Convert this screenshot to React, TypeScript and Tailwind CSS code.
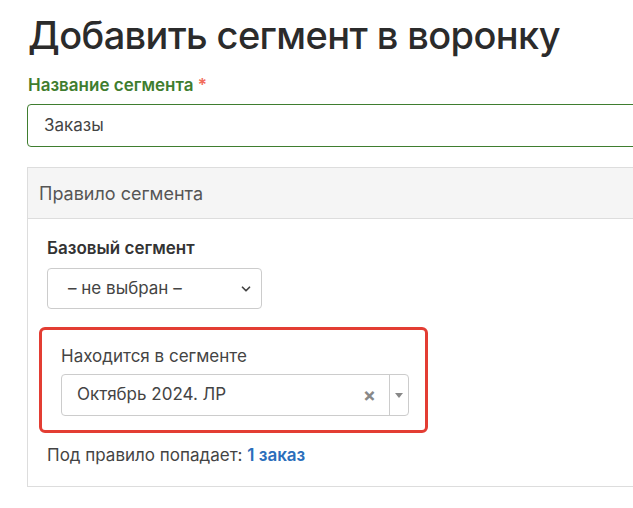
import { ChevronDown } from "lucide-react";

export default function App() {
  return (
    <div className="min-h-screen overflow-hidden bg-white pl-[27px] pt-[10px] text-[#333] [font-family:Inter,'Noto_Sans',sans-serif]">
      <h1 className="text-[38px] leading-[50px] font-medium tracking-[-0.6px] text-[#2b2b2b] pl-px">
        Добавить сегмент в воронку
      </h1>

      <label className="mt-[13px] block pl-px text-[17px] leading-6 font-semibold text-[#3f7d2f]">
        Название сегмента <span className="text-[#f26b5b]">*</span>
      </label>
      <div className="mt-[7px] flex h-[43px] w-[640px] items-center rounded-[4px] border border-[#3f7d2f] pl-4 text-[17px] text-[#444]">
        Заказы
      </div>

      <div className="mt-5 w-[640px] border border-[#ddd]">
        <div className="flex h-[51px] items-center border-b border-[#ddd] bg-[#f5f5f5] pl-[11px] text-[18px] text-[#555]">
          Правило сегмента
        </div>
        <div className="px-[19px] pt-[17px] pb-[19px]">
          <div className="text-[17px] leading-6 font-semibold text-[#333]">Базовый сегмент</div>
          <div className="mt-[8px] flex h-[41px] w-[215px] items-center justify-between rounded-[4px] border border-[#ccc] pl-[20px] pr-[8px] text-[17px] text-[#444]">
            <span>– не выбран –</span>
            <ChevronDown className="size-[14px] text-[#444]" strokeWidth={3} />
          </div>

          <div className="mt-[18px] -ml-[8px] w-[389px] rounded-[6px] border-[3px] border-[#e33d33] px-[19px] pt-[14px] pb-[14px]">
            <div className="text-[17px] leading-6 text-[#444]">Находится в сегменте</div>
            <div className="mt-[6px] flex h-[42px] w-[348px] items-center rounded-[4px] border border-[#ccc] text-[17px] text-[#444]">
              <span className="flex-1 pl-[15px]">Октябрь 2024. ЛР</span>
              <span className="pr-[13px] text-[19px] leading-none font-bold text-[#888]">×</span>
              <span className="flex h-full w-[19px] items-center justify-center border-l border-[#ccc]">
                <svg width="8" height="5" viewBox="0 0 8 5">
                  <path d="M0 0h8L4 5z" fill="#888" />
                </svg>
              </span>
            </div>
          </div>

          <div className="mt-[10px] text-[17px] leading-6 text-[#444]">
            Под правило попадает: <span className="font-semibold text-[#2a6ebb]">1 заказ</span>
          </div>
        </div>
      </div>
    </div>
  );
}
